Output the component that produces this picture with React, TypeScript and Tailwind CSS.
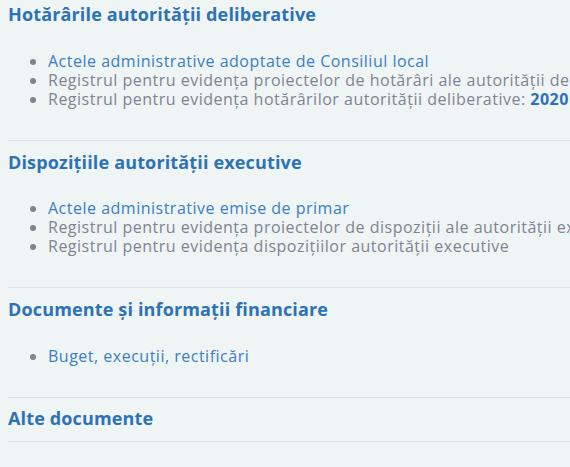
import React from "react";

type Item = { text: string; link?: boolean; tail?: string };

type Section = { title: string; items: Item[]; pad: string; gap?: string };

const sections: Section[] = [
  {
    title: "Hotărârile autorității deliberative",
    pad: "pt-[2px] pb-[31px]",
    gap: "mt-[26px]",
    items: [
      { text: "Actele administrative adoptate de Consiliul local", link: true },
      { text: "Registrul pentru evidența proiectelor de hotărâri ale autorității deliberative" },
      { text: "Registrul pentru evidența hotărârilor autorității deliberative: ", tail: "2020" },
    ],
  },
  {
    title: "Dispozițiile autorității executive",
    pad: "pt-[9px] pb-[31px]",
    gap: "mt-[25px]",
    items: [
      { text: "Actele administrative emise de primar", link: true },
      { text: "Registrul pentru evidența proiectelor de dispoziții ale autorității executive" },
      { text: "Registrul pentru evidența dispozițiilor autorității executive" },
    ],
  },
  {
    title: "Documente și informații financiare",
    pad: "pt-[9px] pb-[31px]",
    gap: "mt-[26px]",
    items: [{ text: "Buget, execuții, rectificări", link: true }],
  },
  { title: "Alte documente", pad: "pt-[8px] pb-[11px]", items: [] },
];

function App() {
  return (
    <div
      className="min-h-[467px] w-full overflow-hidden bg-[#eff4f5] pl-2"
      style={{ fontFamily: '"Open Sans", "Noto Sans", sans-serif' }}
    >
      {sections.map((s) => (
        <div key={s.title} className={`w-[900px] border-b border-[#dde2e4] ${s.pad}`}>
          <h3 className="text-[18px] leading-[24px] font-bold tracking-[0.15px] text-[#2d72b6]">{s.title}</h3>
          {s.items.length > 0 && (
            <ul className={`${s.gap} list-disc pl-[40px] text-[16px] leading-[19px] tracking-[0.5px] marker:text-[#7d8593] whitespace-nowrap`}>
              {s.items.map((it) => (
                <li key={it.text} className={it.link ? "text-[#3b7ec4]" : "text-[#7d8593]"}>
                  {it.text}
                  {it.tail && <span className="font-bold text-[#2d72b6]">{it.tail}</span>}
                </li>
              ))}
            </ul>
          )}
        </div>
      ))}
    </div>
  );
}

export default App;
